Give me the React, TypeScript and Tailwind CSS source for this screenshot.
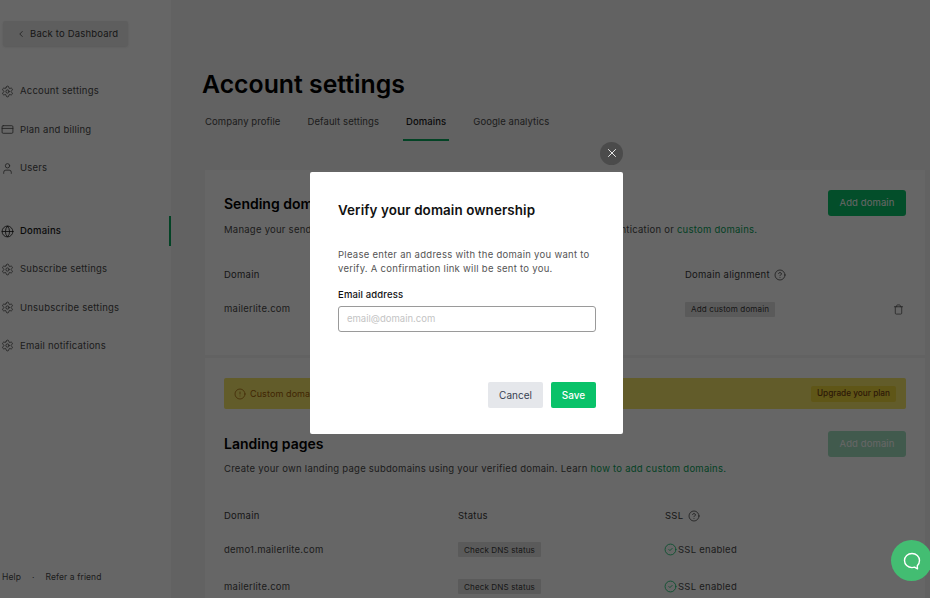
import { ChevronLeft, Settings, CreditCard, User, Globe, X, CircleHelp, Trash, CircleCheck, CircleAlert } from "lucide-react";

const navTop = [
  { label: "Account settings", Icon: Settings },
  { label: "Plan and billing", Icon: CreditCard },
  { label: "Users", Icon: User },
];
const navBottom = [
  { label: "Subscribe settings", Icon: Settings },
  { label: "Unsubscribe settings", Icon: Settings },
  { label: "Email notifications", Icon: Settings },
];

function NavItem({ label, Icon, active }: { label: string; Icon: typeof Settings; active?: boolean }) {
  return (
    <div className={`flex h-[30px] items-center gap-[6px] pl-[1px] text-[9.5px] tracking-[0.22px] ${active ? "font-medium text-[#1a1a1a] border-r-2 border-[#09a85c]" : "text-[#4a4a4a]"}`}>
      <Icon size={13} strokeWidth={1.5} className="shrink-0" />
      <span>{label}</span>
    </div>
  );
}

function Tag({ children }: { children: string }) {
  return <span className="inline-flex h-[15px] w-fit items-center rounded-[1px] bg-[#e2e2e2] px-[6px] text-[8.1px] tracking-[0.1px] whitespace-nowrap text-[#3a3a3a]">{children}</span>;
}

function DnsRow({ domain }: { domain: string }) {
  return (
    <div className="grid h-[37px] grid-cols-[234px_207px_1fr] items-center text-[9.5px] tracking-[0.25px] text-[#4a4a4a]">
      <span>{domain}</span>
      <Tag>Check DNS status</Tag>
      <span className="-ml-[1px] flex items-center">
        <CircleCheck size={13} strokeWidth={1.5} className="text-[#09c269]" />
        <span className="ml-[1px]">SSL enabled</span>
      </span>
    </div>
  );
}

export default function App() {
  return (
    <div className="relative flex h-[598px] w-[930px] overflow-hidden bg-[#f4f4f4] font-['Inter',sans-serif]">
      <aside className="flex w-[171px] shrink-0 flex-col bg-white">
        <button className="ml-[3px] mt-[21px] flex h-[25px] w-[125px] items-center gap-[4.5px] rounded-[2px] bg-[#ececec] pt-[1px] pl-[12.5px] text-[9.5px] tracking-[0.18px] whitespace-nowrap text-[#3a3a3a] shadow-sm">
          <ChevronLeft size={10} strokeWidth={1.8} />
          Back to Dashboard
        </button>
        <nav className="mt-[30.5px] flex flex-col gap-[8.3px]">
          {navTop.map((n) => <NavItem key={n.label} {...n} />)}
        </nav>
        <nav className="mt-[33px] flex flex-col gap-[8.3px]">
          <NavItem label="Domains" Icon={Globe} active />
          {navBottom.map((n) => <NavItem key={n.label} {...n} />)}
        </nav>
        <div className="mt-auto mb-[14px] flex items-center gap-[11px] pl-[2px] text-[8.5px] tracking-[0.1px] text-[#4a4a4a]">
          <span>Help</span>
          <span>·</span>
          <span>Refer a friend</span>
        </div>
      </aside>

      <main className="min-w-0 flex-1 pl-[31px]">
        <h1 className="mt-[67px] text-[24.8px] font-semibold leading-[34px] text-black">Account settings</h1>
        <div className="mt-[10px] flex gap-[27px] pl-[3px] text-[9.5px] tracking-[0.08px] text-[#4a4a4a]">
          <span className="h-[30px] pt-[4px]">Company profile</span>
          <span className="h-[30px] pt-[4px]">Default settings</span>
          <span className="-mx-[3px] h-[30px] border-b-2 border-[#09a85c] px-[3px] pt-[4px] font-medium text-[#1a1a1a]">Domains</span>
          <span className="h-[30px] pt-[4px]">Google analytics</span>
        </div>

        <section className="mt-[29px] mr-[5px] ml-[3px] h-[185px] bg-white px-[19px] pt-[20px]">
          <div className="flex items-start justify-between">
            <h2 className="mt-[3px] text-[14px] font-semibold text-black">Sending domains</h2>
            <button className="h-[26px] w-[78px] rounded-[3px] bg-[#09c269] text-[9.5px] tracking-[0.1px] text-white">Add domain</button>
          </div>
          <p className="mt-[7px] text-[9.5px] tracking-[0.25px] text-[#4a4a4a]">
            Manage your sending domains using SPF and DKIM records for better domain authentication or <span className="text-[#09a25a]">custom domains.</span>
          </p>
          <div className="mt-[31px] grid grid-cols-[461px_1fr] items-center text-[9.5px] tracking-[0.25px] text-[#3a3a3a]">
            <span>Domain</span>
            <span className="flex items-center gap-[4px]">Domain alignment <CircleHelp size={12} strokeWidth={1.5} /></span>
          </div>
          <div className="mt-[19px] grid grid-cols-[461px_1fr_auto] items-center text-[9.5px] tracking-[0.25px] text-[#4a4a4a]">
            <span>mailerlite.com</span>
            <Tag>Add custom domain</Tag>
            <Trash size={11} strokeWidth={1.6} className="mr-[2px]" />
          </div>
        </section>

        <section className="mt-[3px] mr-[5px] ml-[3px] h-[300px] bg-white px-[19px] pt-[20px]">
          <div className="flex h-[31px] items-center justify-between rounded-[2px] bg-[#f5e56a] px-[10px]">
            <span className="flex items-center gap-[4px] text-[9px] tracking-[0.1px] text-[#a16207]">
              <CircleAlert size={12} strokeWidth={1.5} />
              Custom domains are available on paid plans
            </span>
            <span className="flex h-[16px] items-center rounded-[2px] bg-[#eed63a] px-[6px] text-[8.25px] font-medium text-[#713f12]">Upgrade your plan</span>
          </div>
          <div className="mt-[22px] flex items-start justify-between">
            <h2 className="mt-[2px] text-[14px] font-semibold text-black">Landing pages</h2>
            <button className="h-[26px] w-[78px] rounded-[3px] bg-[#a3e0c0] text-[9.5px] tracking-[0.1px] text-white">Add domain</button>
          </div>
          <p className="mt-[5px] text-[9.5px] tracking-[0.25px] text-[#4a4a4a]">
            Create your own landing page subdomains using your verified domain. Learn <span className="text-[#09a25a]">how to add custom domains.</span>
          </p>
          <div className="mt-[33px] grid h-[13px] grid-cols-[234px_207px_1fr] items-center text-[9.5px] tracking-[0.25px] text-[#3a3a3a]">
            <span>Domain</span>
            <span>Status</span>
            <span className="flex items-center gap-[5px]">SSL <CircleHelp size={12} strokeWidth={1.5} /></span>
          </div>
          <div className="mt-[9px]">
            <DnsRow domain="demo1.mailerlite.com" />
            <DnsRow domain="mailerlite.com" />
          </div>
        </section>
      </main>

      <div className="absolute inset-0 bg-black/60" />

      <div className="absolute top-[141.5px] left-[600px] flex h-[23px] w-[23px] items-center justify-center rounded-full bg-[#4b4b4b] text-white">
        <X size={14} strokeWidth={1.5} />
      </div>

      <div className="absolute top-[172px] left-[310px] flex h-[262px] w-[313px] flex-col rounded-[2px] bg-white pt-[30px] pr-[27px] pl-[28px]">
        <h3 className="text-[13.4px] font-semibold leading-[17px] tracking-[0.1px] text-[#111111]">Verify your domain ownership</h3>
        <p className="mt-[29px] text-[9.5px] leading-[14px] tracking-[0.28px] text-[#555555]">
          Please enter an address with the domain you want to verify. A confirmation link will be sent to you.
        </p>
        <label className="mt-[12px] text-[9.5px] font-medium leading-[13px] tracking-[0.15px] text-[#111111]">Email address</label>
        <div className="mt-[5px] flex h-[26px] items-center rounded-[3px] border border-[#9a9a9a] pt-[1px] pl-[8px] text-[9.5px] text-[#c4c4c4]">email@domain.com</div>
        <div className="mt-[50px] flex justify-end gap-[8px]">
          <button className="h-[26px] w-[55px] rounded-[2px] bg-[#e5e7eb] text-[10px] text-[#374151]">Cancel</button>
          <button className="h-[26px] w-[45px] rounded-[2px] bg-[#09c269] text-[10px] font-medium text-white">Save</button>
        </div>
      </div>

      <div className="absolute top-[540px] left-[891px] flex h-[41px] w-[41px] items-center justify-center rounded-full bg-[#43bd72] text-white">
        <svg width="18" height="18" viewBox="0 0 18 18" fill="none" stroke="currentColor" strokeWidth="1.4" strokeLinejoin="round">
          <path d="M9 1.5C4.8 1.5 1.5 4.6 1.5 8.6c0 4 3.3 7 7.5 7 .9 0 1.7-.1 2.5-.4l3 1.6-.2-3c1.3-1.3 2.2-3.2 2.2-5.2 0-4-3.3-7.1-7.5-7.1Z" />
        </svg>
      </div>
    </div>
  );
}
